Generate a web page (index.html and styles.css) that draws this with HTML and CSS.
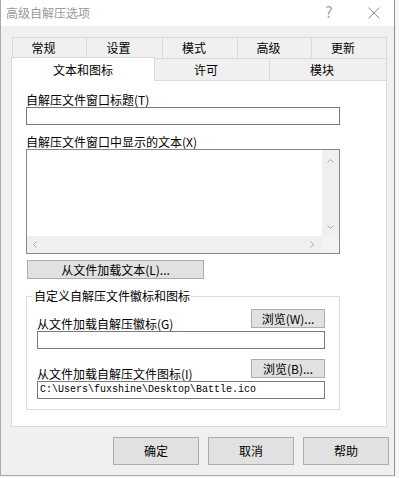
FILE: index.html
```html
<!DOCTYPE html>
<html>
<head>
    <meta charset="UTF-8" />
    <title>高级自解压选项</title>
    <link rel="stylesheet" href="styles.css">
</head>

<body>
    <div class="dialog">
        <div class="titlebar">
            <div class="title">高级自解压选项</div>
            <div class="title-btn help-btn">?</div>
            <div class="title-btn close-btn">
                <svg width="12" height="12" viewBox="0 0 12 12">
                    <path d="M0.5 0.5 L11.5 11.5 M11.5 0.5 L0.5 11.5" stroke="#8c8c8c" stroke-width="1" fill="none" />
                </svg>
            </div>
        </div>

        <div class="body">
            <div class="tabs-row tabs-top">
                <div class="tab w74">常规</div>
                <div class="tab w76">设置</div>
                <div class="tab w75">模式</div>
                <div class="tab w74">高级</div>
                <div class="tab w76 last">更新</div>
            </div>
            <div class="tabs-row tabs-bottom">
                <div class="tab active">文本和图标</div>
                <div class="tab w115">许可</div>
                <div class="tab w117">模块</div>
            </div>

            <div class="panel">
                <div class="label">自解压文件窗口标题(T)</div>
                <div class="field"></div>

                <div class="label label-second">自解压文件窗口中显示的文本(X)</div>
                <div class="memo">
                    <div class="memo-text"></div>
                    <div class="vscroll">
                        <svg width="7" height="4" viewBox="0 0 7 4"><polyline points="0.5,3.5 3.5,0.5 6.5,3.5" stroke="#a6a6a6" fill="none" /></svg>
                        <svg width="7" height="4" viewBox="0 0 7 4"><polyline points="0.5,0.5 3.5,3.5 6.5,0.5" stroke="#a6a6a6" fill="none" /></svg>
                    </div>
                    <div class="hscroll">
                        <svg width="4" height="7" viewBox="0 0 4 7"><polyline points="3.5,0.5 0.5,3.5 3.5,6.5" stroke="#a6a6a6" fill="none" /></svg>
                        <svg width="4" height="7" viewBox="0 0 4 7"><polyline points="0.5,0.5 3.5,3.5 0.5,6.5" stroke="#a6a6a6" fill="none" /></svg>
                    </div>
                    <div class="corner"></div>
                </div>

                <button class="btn load-btn">从文件加载文本(L)...</button>

                <fieldset class="group">
                    <legend>自定义自解压文件徽标和图标</legend>
                    <div class="group-row">
                        <div class="group-label">从文件加载自解压徽标(G)</div>
                        <button class="btn browse-btn">浏览(W)...</button>
                    </div>
                    <div class="field small"></div>

                    <div class="group-row next">
                        <div class="group-label">从文件加载自解压文件图标(I)</div>
                        <button class="btn browse-btn">浏览(B)...</button>
                    </div>
                    <div class="field small path">C:\Users\fuxshine\Desktop\Battle.ico</div>
                </fieldset>
            </div>

            <div class="actions">
                <button class="btn action-btn">确定</button>
                <button class="btn action-btn">取消</button>
                <button class="btn action-btn">帮助</button>
            </div>
        </div>
    </div>
</body>
</html>
```

FILE: styles.css
```css
* {
    margin: 0;
    padding: 0;
    box-sizing: border-box;
}

body {
    width: 399px;
    height: 478px;
    overflow: hidden;
    background: #f6f6f6;
    font-family: "Noto Sans CJK SC", sans-serif;
    font-size: 12px;
    color: #000;
}

.dialog {
    width: 395px;
    height: 476px;
    background: #f0f0f0;
    border-left: 1px solid #a9a9a9;
    border-right: 1px solid #8f8f8f;
    border-bottom: 1px solid #a9a9a9;
}

.titlebar {
    height: 26px;
    background: #fff;
    display: flex;
    align-items: center;
}

.title {
    flex: 1;
    padding-left: 5px;
    color: #999;
    line-height: 26px;
}

.title-btn {
    height: 26px;
    display: flex;
    align-items: center;
    justify-content: center;
}

.help-btn {
    width: 50px;
    color: #a8a8a8;
    font-family: "DejaVu Sans", sans-serif;
    font-size: 15px;
}

.close-btn {
    width: 40px;
}

.body {
    padding: 11px 0 0 10px;
}

.tabs-row {
    display: flex;
    align-items: flex-start;
}

.tab {
    display: flex;
    align-items: center;
    justify-content: center;
    padding-right: 12px;
    border-top: 1px solid #d9d9d9;
    line-height: 1;
}

.tabs-top {
    margin-left: 1px;
    height: 21px;
}

.tabs-top .tab {
    height: 21px;
    border-left: 1px solid #d9d9d9;
}

.tabs-top .tab.last {
    border-right: 1px solid #d9d9d9;
}

.tabs-bottom {
    height: 23px;
}

.tabs-bottom .tab {
    height: 23px;
    border-right: 1px solid #d9d9d9;
    border-bottom: 1px solid #d9d9d9;
}

.tabs-bottom .tab.active {
    width: 144px;
    height: 24px;
    margin-top: -1px;
    padding-right: 0;
    background: #fff;
    border-left: 1px solid #d9d9d9;
    border-bottom: none;
}

.w74 { width: 74px; }
.w75 { width: 75px; }
.w76 { width: 76px; }
.w115 { width: 115px; }
.w117 { width: 117px; }

.panel {
    width: 376px;
    height: 346px;
    background: #fff;
    border: 1px solid #d9d9d9;
    border-top: none;
    padding: 11px 0 0 14px;
}

.label {
    line-height: 15px;
    white-space: nowrap;
}

.label-second {
    margin-top: 9px;
}

.field {
    width: 314px;
    height: 18px;
    background: #fff;
    border: 1px solid #7a7a7a;
}

.memo {
    width: 314px;
    height: 105px;
    border: 1px solid #828790;
    display: grid;
    grid-template-columns: 1fr 17px;
    grid-template-rows: 1fr 17px;
}

.memo-text {
    background: #fff;
}

.vscroll {
    background: #f0f0f0;
    display: flex;
    flex-direction: column;
    justify-content: space-between;
    align-items: center;
    padding: 9px 0 7px;
}

.hscroll {
    background: #f0f0f0;
    display: flex;
    justify-content: space-between;
    align-items: center;
    padding: 0 8px 0 6px;
}

.corner {
    background: #f3f3f3;
}

.btn {
    display: flex;
    align-items: center;
    justify-content: center;
    background: #e1e1e1;
    border: 1px solid #adadad;
    font-family: inherit;
    font-size: 12px;
    color: #000;
    line-height: 1;
}

.load-btn {
    width: 177px;
    height: 19px;
    margin: 6px 0 0 1px;
}

.group {
    width: 314px;
    margin-top: 9px;
    border: 1px solid #dcdcdc;
    padding: 5px 14px 10px 10px;
}

.group legend {
    margin-left: -4px;
    padding: 0 1px;
    line-height: 16px;
}

.group-row {
    display: flex;
    justify-content: space-between;
    align-items: flex-start;
}

.group-row.next {
    margin-top: 10px;
}

.group-label {
    margin-top: 7px;
    line-height: 15px;
    white-space: nowrap;
}

.browse-btn {
    width: 74px;
    height: 19px;
}

.field.small {
    width: 288px;
}

.path {
    padding-left: 2px;
    font-family: "Liberation Mono", monospace;
    font-size: 10px;
    line-height: 16px;
    white-space: nowrap;
}

.actions {
    display: flex;
    gap: 9px;
    margin-top: 10px;
    padding-left: 102px;
}

.action-btn {
    width: 86px;
    height: 28px;
}
```
